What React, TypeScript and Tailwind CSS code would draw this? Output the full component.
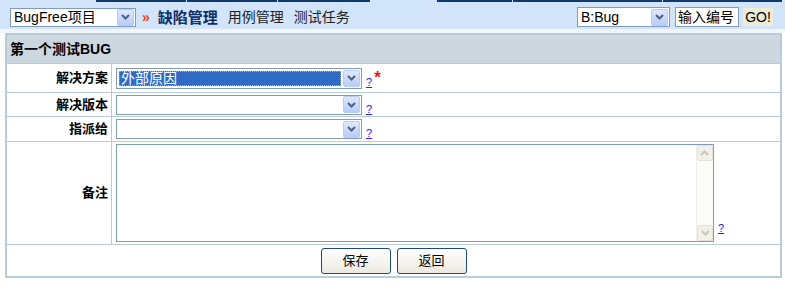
import React from "react";

const font = { fontFamily: '"Liberation Sans", "Noto Sans CJK SC", sans-serif' };

function Arrow({ disabled = false }: { disabled?: boolean }) {
  return (
    <div
      className={
        disabled
          ? "flex h-[16px] w-[16px] items-center justify-center rounded-[2px] border border-[#e4e2d6] bg-[#f1f0e9]"
          : "flex h-[17px] w-[17px] shrink-0 items-center justify-center rounded-[2px] border border-[#b9cbf3] bg-gradient-to-b from-[#dfe8fd] to-[#b8ccf8]"
      }
    >
      <svg width="9" height="6" viewBox="0 0 9 6">
        <path d="M1 1 L4.5 4.5 L8 1" fill="none" stroke={disabled ? "#c9c7ba" : "#4d6185"} strokeWidth="2" />
      </svg>
    </div>
  );
}

function Select({
  w,
  h = "h-[19px]",
  text = "",
  selected = false,
}: {
  w: string;
  h?: string;
  text?: string;
  selected?: boolean;
}) {
  return (
    <div className={`flex ${w} ${h} shrink-0 items-center border border-[#7f9db9] bg-white pr-[1px]`}>
      {selected ? (
        <div className="mx-[2px] flex h-[15px] flex-1 items-center border border-dotted border-[#e8a33a] bg-[#316ac5] pl-[1px] text-[14px] leading-none text-white">
          {text}
        </div>
      ) : (
        <div className="flex-1 pl-[3px] text-[14px] leading-none text-black">{text}</div>
      )}
      <Arrow />
    </div>
  );
}

function Help() {
  return <span className="text-[11px] leading-none text-[#2020ee] underline">?</span>;
}

function Label({ children }: { children: React.ReactNode }) {
  return (
    <div className="flex w-[105px] shrink-0 items-center justify-end border-r border-[#b6ccdb] pr-[3px] text-[13px] font-bold text-black">
      {children}
    </div>
  );
}

export default function App() {
  return (
    <div className="w-[785px] h-[287px] bg-white" style={font}>
      {/* 顶部导航 */}
      <div className="flex h-[29px] flex-col bg-[#d2e4fa]">
        <div className="flex h-[2px]">
          <div className="w-[96px]" />
          <div className="w-[90px] bg-[#0f3a6a]" />
          <div className="w-[1px]" />
          <div className="w-[90px] bg-[#0f3a6a]" />
          <div className="w-[1px]" />
          <div className="w-[92px] bg-[#0f3a6a]" />
          <div className="w-[67px]" />
          <div className="w-[75px] bg-[#0f3a6a]" />
          <div className="w-[1px]" />
          <div className="w-[149px] bg-[#0f3a6a]" />
          <div className="w-[1px]" />
          <div className="w-[119px] bg-[#0f3a6a]" />
        </div>
        <div className="flex items-center pl-[10px] pt-[5px]">
          <Select w="w-[126px]" text="BugFree项目" />
          <span className="ml-[6px] text-[14px] font-bold leading-none text-[#f0401a]">»</span>
          <span className="ml-[8px] text-[15px] font-bold leading-none text-[#0d2f6b]">缺陷管理</span>
          <span className="ml-[10px] text-[14px] leading-none text-[#222]">用例管理</span>
          <span className="ml-[10px] text-[14px] leading-none text-[#222]">测试任务</span>
          <div className="ml-auto mr-[12px] flex items-center">
            <Select w="w-[93px]" h="h-[20px]" text="B:Bug" />
            <div className="ml-[5px] flex h-[20px] w-[64px] items-center border border-[#7f9db9] bg-white pl-[2px] text-[14px] leading-none text-black">
              输入编号
            </div>
            <div className="ml-[4px] flex h-[18px] w-[30px] items-center justify-center bg-[#eeebd6] text-[14px] leading-none text-black">
              GO!
            </div>
          </div>
        </div>
      </div>
      <div className="h-[4px] bg-[#f3f4f5]" />

      {/* 表单 */}
      <div className="ml-[5px] w-[777px] border-2 border-[#b6ccdb]">
        <div className="flex h-[29px] items-center border-b border-[#b6ccdb] bg-[#cdd7e0] pl-[3px] text-[14px] font-bold text-black">
          第一个测试BUG
        </div>

        <div className="flex h-[29px] border-b border-[#b6ccdb]">
          <Label>解决方案</Label>
          <div className="flex items-center pl-[4px]">
            <Select w="w-[246px]" h="h-[21px]" text="外部原因" selected />
            <div className="ml-[4px] mt-[6px]">
              <Help />
            </div>
            <span className="-mt-[2px] ml-[2px] text-[17px] font-bold leading-none text-[#ee1111]">*</span>
          </div>
        </div>

        <div className="flex h-[24px] border-b border-[#b6ccdb]">
          <Label>解决版本</Label>
          <div className="flex items-center pl-[4px]">
            <Select w="w-[246px]" h="h-[20px]" />
            <div className="ml-[4px] mt-[6px]">
              <Help />
            </div>
          </div>
        </div>

        <div className="flex h-[25px] border-b border-[#b6ccdb]">
          <Label>指派给</Label>
          <div className="flex items-center pl-[4px]">
            <Select w="w-[246px]" h="h-[20px]" />
            <div className="ml-[4px] mt-[6px]">
              <Help />
            </div>
          </div>
        </div>

        <div className="flex h-[103px] border-b border-[#b6ccdb]">
          <Label>备注</Label>
          <div className="flex items-center pl-[4px]">
            <div className="flex h-[98px] w-[598px] justify-end border border-[#7f9db9] bg-white">
              <div className="flex w-[17px] flex-col justify-between border-l border-[#f1f0ea] bg-[#fbfbf8]">
                <div className="rotate-180">
                  <Arrow disabled />
                </div>
                <Arrow disabled />
              </div>
            </div>
            <div className="ml-[4px] self-end pb-[5px]">
              <Help />
            </div>
          </div>
        </div>

        <div className="flex h-[31px] items-center justify-center gap-[6px]">
          <button className="h-[26px] w-[70px] rounded-[3px] border border-[#1c4b7c] bg-gradient-to-b from-white to-[#ece9e0] text-[13px] text-black">
            保存
          </button>
          <button className="h-[26px] w-[70px] rounded-[3px] border border-[#1c4b7c] bg-gradient-to-b from-white to-[#ece9e0] text-[13px] text-black">
            返回
          </button>
        </div>
      </div>
    </div>
  );
}
